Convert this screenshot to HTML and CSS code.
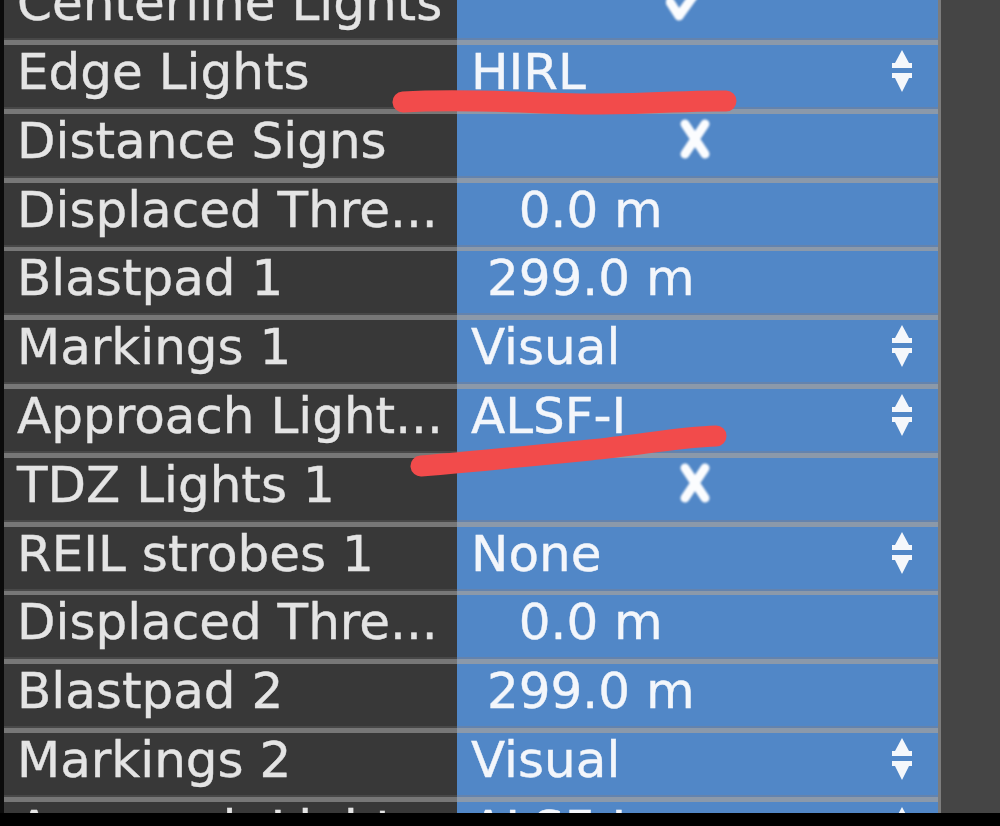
FILE: index.html
```html
<!DOCTYPE html>
<html>
<head>
<meta charset="utf-8">
<link rel="stylesheet" href="styles.css">
</head>
<body>
<div class="screen">
  <div class="edge"></div>
  <div class="table">
    <div class="row">
      <div class="name">Centerline Lights</div>
      <div class="value flag"><svg class="check" width="44" height="46" viewBox="0 0 44 46"><polyline points="4,26 13,40 39,4" /></svg></div>
    </div>
    <div class="row">
      <div class="name">Edge Lights</div>
      <div class="value"><span class="text">HIRL</span><svg class="spin" width="22" height="42" viewBox="0 0 22 42"><path d="M11 0 L18 13 L21 13 L21 18 L1 18 L1 13 L4 13 Z M1 23 L21 23 L21 28 L18 28 L11 42 L4 28 L1 28 Z"/></svg></div>
    </div>
    <div class="row">
      <div class="name">Distance Signs</div>
      <div class="value flag"><svg class="cross" width="36" height="44" viewBox="0 0 36 44"><path d="M8 7 L28 37 M28 7 L8 37"/></svg></div>
    </div>
    <div class="row">
      <div class="name">Displaced Thre...</div>
      <div class="value"><span class="text">   0.0 m</span></div>
    </div>
    <div class="row">
      <div class="name">Blastpad 1</div>
      <div class="value"><span class="text"> 299.0 m</span></div>
    </div>
    <div class="row">
      <div class="name">Markings 1</div>
      <div class="value"><span class="text">Visual</span><svg class="spin" width="22" height="42" viewBox="0 0 22 42"><path d="M11 0 L18 13 L21 13 L21 18 L1 18 L1 13 L4 13 Z M1 23 L21 23 L21 28 L18 28 L11 42 L4 28 L1 28 Z"/></svg></div>
    </div>
    <div class="row">
      <div class="name">Approach Light...</div>
      <div class="value"><span class="text">ALSF-I</span><svg class="spin" width="22" height="42" viewBox="0 0 22 42"><path d="M11 0 L18 13 L21 13 L21 18 L1 18 L1 13 L4 13 Z M1 23 L21 23 L21 28 L18 28 L11 42 L4 28 L1 28 Z"/></svg></div>
    </div>
    <div class="row">
      <div class="name">TDZ Lights 1</div>
      <div class="value flag"><svg class="cross" width="36" height="44" viewBox="0 0 36 44"><path d="M8 7 L28 37 M28 7 L8 37"/></svg></div>
    </div>
    <div class="row">
      <div class="name">REIL strobes 1</div>
      <div class="value"><span class="text">None</span><svg class="spin" width="22" height="42" viewBox="0 0 22 42"><path d="M11 0 L18 13 L21 13 L21 18 L1 18 L1 13 L4 13 Z M1 23 L21 23 L21 28 L18 28 L11 42 L4 28 L1 28 Z"/></svg></div>
    </div>
    <div class="row">
      <div class="name">Displaced Thre...</div>
      <div class="value"><span class="text">   0.0 m</span></div>
    </div>
    <div class="row">
      <div class="name">Blastpad 2</div>
      <div class="value"><span class="text"> 299.0 m</span></div>
    </div>
    <div class="row">
      <div class="name">Markings 2</div>
      <div class="value"><span class="text">Visual</span><svg class="spin" width="22" height="42" viewBox="0 0 22 42"><path d="M11 0 L18 13 L21 13 L21 18 L1 18 L1 13 L4 13 Z M1 23 L21 23 L21 28 L18 28 L11 42 L4 28 L1 28 Z"/></svg></div>
    </div>
    <div class="row">
      <div class="name">Approach Light...</div>
      <div class="value"><span class="text">ALSF-I</span><svg class="spin" width="22" height="42" viewBox="0 0 22 42"><path d="M11 0 L18 13 L21 13 L21 18 L1 18 L1 13 L4 13 Z M1 23 L21 23 L21 28 L18 28 L11 42 L4 28 L1 28 Z"/></svg></div>
    </div>
  </div>
  <div class="side"></div>
  <svg class="marks" width="1000" height="813" viewBox="0 0 1000 813">
    <path d="M403 102 C 470 98, 540 104, 600 104 S 690 100, 726 101"/>
    <path d="M421 466 C 480 461, 540 455, 590 450 S 680 437, 716 436"/>
  </svg>
</div>
</body>
</html>
```

FILE: styles.css
```css
body {
  margin: 0;
  background: #000;
}

.screen {
  position: relative;
  display: flex;
  height: 813px;
  overflow: hidden;
  font-family: "DejaVu Sans", sans-serif;
  font-size: 50px;
}

.edge {
  width: 4px;
  flex: none;
  background: #0b0b0b;
}

.table {
  width: 934px;
  flex: none;
  margin-top: -23.8px;
}

.row {
  display: grid;
  grid-template-columns: 453px 1fr;
  height: 68.8px;
}

.name {
  background: linear-gradient(#383838 0 61.8px, #484848 61.8px 64.3px, #777 64.3px);
  color: #e4e4e4;
  padding-left: 13px;
  line-height: 55px;
  white-space: nowrap;
  -webkit-text-stroke: 0.4px #e4e4e4;
}

.value {
  background: linear-gradient(#5187c7 0 61.8px, #6483ad 61.8px 64.3px, #8b99aa 64.3px);
  color: #f3f6fb;
  display: flex;
  justify-content: space-between;
  align-items: flex-start;
  padding-left: 14px;
  padding-right: 25px;
}

.value .text {
  line-height: 55px;
  white-space: pre;
  -webkit-text-stroke: 0.4px #f3f6fb;
}

.spin {
  margin-top: 5px;
  fill: #f4f7fb;
  filter: blur(0.6px);
}

.value.flag {
  justify-content: center;
}

.check {
  margin-left: -8px;
  fill: none;
  stroke: #fbfcfe;
  stroke-width: 9;
  stroke-linecap: round;
  stroke-linejoin: round;
  filter: blur(1px);
}

.cross {
  margin-top: 3px;
  margin-left: 6px;
  fill: none;
  stroke: #fbfcfe;
  stroke-width: 9;
  stroke-linecap: round;
  filter: blur(1px);
}

.side {
  flex: 1;
  background: #454545;
  border-left: 3px solid #7d7d7d;
}

.marks {
  position: absolute;
  left: 0;
  top: 0;
  pointer-events: none;
  fill: none;
  stroke: #f24b4b;
  stroke-width: 21;
  stroke-linecap: round;
}
```
